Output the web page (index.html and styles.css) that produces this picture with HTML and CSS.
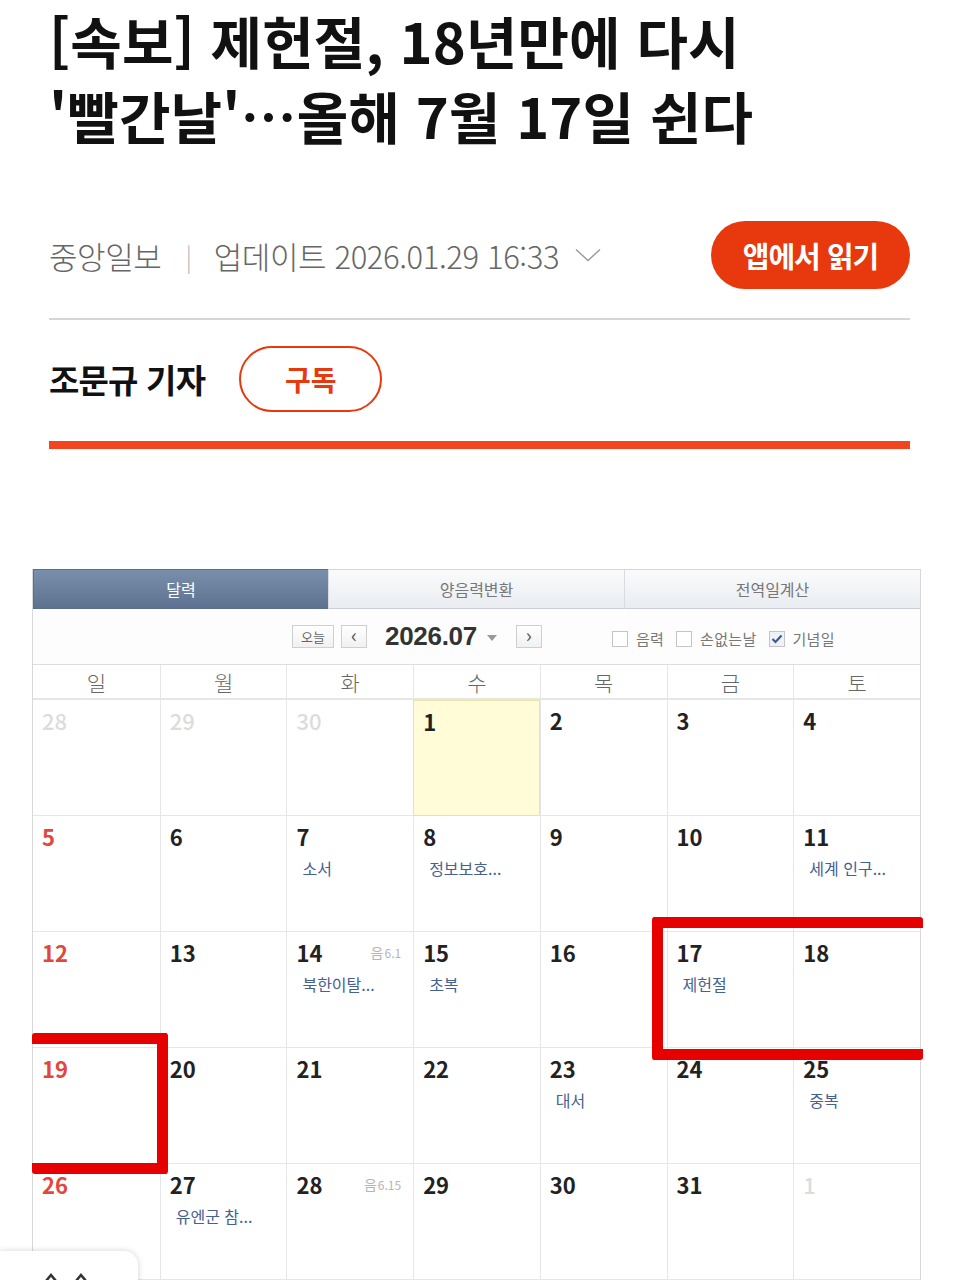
FILE: index.html
```html
<!DOCTYPE html>
<html lang="ko">
<head>
<meta charset="utf-8">
<title>제헌절 기사</title>
<link rel="stylesheet" href="styles.css">
</head>
<body>
<main class="article">
  <h1 class="title">[속보] 제헌절, 18년만에 다시<br>'빨간날'…올해 7월 17일 쉰다</h1>

  <div class="meta">
    <div class="meta-info">
      <span class="source">중앙일보</span>
      <span class="sep">|</span>
      <span class="updated">업데이트 2026.01.29 16:33</span>
      <svg class="chev" width="26" height="14" viewBox="0 0 26 14"><path d="M1 1.5 L13 12.5 L25 1.5" fill="none" stroke="#999" stroke-width="1.4"/></svg>
    </div>
    <a class="app-btn">앱에서 읽기</a>
  </div>

  <div class="byline">
    <span class="reporter">조문규 기자</span>
    <a class="sub-btn">구독</a>
  </div>
  <div class="accent-bar"></div>

  <figure class="cal">
    <div class="cal-tabs">
      <div class="tab tab-on">달력</div>
      <div class="tab">양음력변환</div>
      <div class="tab">전역일계산</div>
    </div>
    <div class="cal-tool">
      <div class="nav">
        <span class="btn-sm btn-today">오늘</span>
        <span class="btn-sm btn-arrow">&lsaquo;</span>
        <span class="ym">2026.07</span>
        <svg class="ym-caret" width="10" height="6" viewBox="0 0 10 6"><path d="M0 0 H10 L5 6 Z" fill="#999"/></svg>
        <span class="btn-sm btn-arrow">&rsaquo;</span>
      </div>
      <div class="opts">
        <span class="chk"></span><span class="opt">음력</span>
        <span class="chk"></span><span class="opt">손없는날</span>
        <span class="chk chk-on"><svg width="12" height="10" viewBox="0 0 12 10"><path d="M1.5 5 L4.5 8 L10.5 1.5" fill="none" stroke="#3d5a8c" stroke-width="2.2"/></svg></span><span class="opt">기념일</span>
      </div>
    </div>
    <div class="cal-head">
      <div>일</div><div>월</div><div>화</div><div>수</div><div>목</div><div>금</div><div>토</div>
    </div>
    <div class="cal-grid">
      <div class="cell off"><span class="num">28</span></div>
      <div class="cell off"><span class="num">29</span></div>
      <div class="cell off"><span class="num">30</span></div>
      <div class="cell today"><span class="num">1</span></div>
      <div class="cell"><span class="num">2</span></div>
      <div class="cell"><span class="num">3</span></div>
      <div class="cell"><span class="num">4</span></div>

      <div class="cell sun"><span class="num">5</span></div>
      <div class="cell"><span class="num">6</span></div>
      <div class="cell"><span class="num">7</span><span class="ev">소서</span></div>
      <div class="cell"><span class="num">8</span><span class="ev">정보보호...</span></div>
      <div class="cell"><span class="num">9</span></div>
      <div class="cell"><span class="num">10</span></div>
      <div class="cell"><span class="num">11</span><span class="ev">세계 인구...</span></div>

      <div class="cell sun"><span class="num">12</span></div>
      <div class="cell"><span class="num">13</span></div>
      <div class="cell"><span class="num">14</span><span class="lunar">음<b>6.1</b></span><span class="ev">북한이탈...</span></div>
      <div class="cell"><span class="num">15</span><span class="ev">초복</span></div>
      <div class="cell"><span class="num">16</span></div>
      <div class="cell"><span class="num">17</span><span class="ev">제헌절</span></div>
      <div class="cell"><span class="num">18</span></div>

      <div class="cell sun"><span class="num">19</span></div>
      <div class="cell"><span class="num">20</span></div>
      <div class="cell"><span class="num">21</span></div>
      <div class="cell"><span class="num">22</span></div>
      <div class="cell"><span class="num">23</span><span class="ev">대서</span></div>
      <div class="cell"><span class="num">24</span></div>
      <div class="cell"><span class="num">25</span><span class="ev">중복</span></div>

      <div class="cell sun"><span class="num">26</span></div>
      <div class="cell"><span class="num">27</span><span class="ev">유엔군 참...</span></div>
      <div class="cell"><span class="num">28</span><span class="lunar">음<b>6.15</b></span></div>
      <div class="cell"><span class="num">29</span></div>
      <div class="cell"><span class="num">30</span></div>
      <div class="cell"><span class="num">31</span></div>
      <div class="cell off"><span class="num">1</span></div>
    </div>
    <div class="mark mark-a"></div>
    <div class="mark mark-b"></div>
  </figure>
</main>
<div class="float-bar">
  <svg width="60" height="12" viewBox="0 0 60 12"><path d="M6 10 L11 4 L16 10" fill="none" stroke="#333" stroke-width="2.5"/><path d="M36 10 L41 4 L46 10" fill="none" stroke="#333" stroke-width="2.5"/></svg>
</div>
</body>
</html>
```

FILE: styles.css
```css
* { box-sizing: border-box; }
html, body { margin: 0; padding: 0; background: #fff; }
body {
  font-family: "Noto Sans CJK KR", "Noto Sans", sans-serif;
  color: #111;
  position: relative;
}
.article { padding: 0 49px 0 49px; }

.title {
  margin: 0;
  padding-top: 2px;
  font-size: 56px;
  line-height: 75px;
  font-weight: 700;
  letter-spacing: 0.1px;
  color: #111;
}

.meta {
  margin-top: 69px;
  height: 68px;
  display: flex;
  align-items: center;
  justify-content: space-between;
}
.meta-info {
  display: flex;
  align-items: center;
  color: #666;
  font-size: 31px;
  font-weight: 300;
  letter-spacing: -0.4px;
}
.sep { color: #bbb; margin: 0 22px 0 24px; font-size: 26px; }
.chev { margin-left: 16px; margin-top: 0; }
.app-btn {
  width: 199px;
  height: 68px;
  border-radius: 34px;
  background: #e8390e;
  color: #fff;
  font-size: 29px;
  font-weight: 700;
  letter-spacing: -1px;
  display: flex;
  align-items: center;
  justify-content: center;
}

.byline {
  margin-top: 29px;
  border-top: 2px solid #d6d6d6;
  padding-top: 26px;
  display: flex;
  align-items: center;
  gap: 34px;
}
.reporter { font-size: 33px; font-weight: 700; letter-spacing: -0.8px; color: #111; }
.sub-btn {
  width: 143px;
  height: 66px;
  border: 2px solid #e8390e;
  border-radius: 33px;
  color: #e8390e;
  font-size: 28px;
  font-weight: 700;
  display: flex;
  align-items: center;
  justify-content: center;
}
.accent-bar { margin-top: 29px; height: 8px; background: #f2441f; }

/* calendar screenshot */
.cal {
  margin: 120px 0 0 -17px;
  width: 889px;
  position: relative;
  border-left: 1px solid #d8d8d8;
  border-right: 1px solid #d8d8d8;
  font-family: "Noto Sans CJK KR", sans-serif;
}
.cal-tabs { display: grid; grid-template-columns: 295px 296px 1fr; height: 40px; }
.tab {
  display: flex; align-items: center; justify-content: center;
  font-size: 16px; color: #777;
  background: linear-gradient(#fafbfc, #e9ecf0);
  border-top: 1px solid #d4d8de;
  border-bottom: 1px solid #c9ced6;
  border-left: 1px solid #d8dce2;
}
.tab-on {
  background: linear-gradient(#7a8fab, #5d7290);
  color: #fff;
  border-color: #5a6f8c;
}
.cal-tool {
  height: 56px;
  display: flex;
  align-items: center;
  padding-left: 259px;
  background: #fdfdfd;
  border-bottom: 1px solid #ddd;
}
.nav { display: flex; align-items: center; }
.btn-sm {
  height: 23px;
  border: 1px solid #cfcfcf;
  background: linear-gradient(#fff, #f1f1f1);
  color: #666;
  display: flex; align-items: center; justify-content: center;
  font-size: 13px;
}
.btn-today { width: 42px; }
.btn-arrow { width: 26px; margin-left: 7px; font-size: 20px; line-height: 1; padding-bottom: 3px; color: #555; }
.ym {
  margin-left: 18px;
  font-family: "Liberation Sans", Arial, sans-serif;
  font-weight: 700;
  font-size: 26px;
  color: #333;
  letter-spacing: -0.3px;
}
.ym-caret { margin: 2px 12px 0 10px; }
.opts { display: flex; align-items: center; margin-left: 70px; padding-top: 4px; }
.chk {
  width: 16px; height: 16px;
  border: 1px solid #c4c4c4;
  background: #fff;
  display: flex; align-items: center; justify-content: center;
}
.chk-on { background: #eef2f8; }
.opt { font-size: 15px; color: #777; margin: 0 12px 0 8px; letter-spacing: 0.3px; }

.cal-head {
  display: grid; grid-template-columns: repeat(7, 1fr);
  height: 35px;
  border-bottom: 2px solid #e6e6e6;
}
.cal-head div {
  display: flex; align-items: center; justify-content: center;
  font-size: 21px; font-weight: 300; color: #666;
  border-left: 1px solid #e6e6e6;
}
.cal-head div:first-child { border-left: none; }

.cal-grid { display: grid; grid-template-columns: repeat(7, 1fr); grid-auto-rows: 116px; }
.cell {
  position: relative;
  border-left: 1px solid #e6e6e6;
  border-bottom: 1px solid #e6e6e6;
  padding: 5px 10px 0 9px;
  display: flex; flex-direction: column; align-items: flex-start;
}
.cal-grid .cell:nth-child(7n+1) { border-left: none; }
.num { font-size: 22px; font-weight: 700; color: #222; line-height: 30px; }
.sun .num { color: #e2473b; }
.off .num { color: #dcdcdc; font-weight: 500; }
.today { background: #fffcd7; border: 1px solid #e9e3a8; }
.ev { margin: 5px 0 0 6px; font-size: 16px; color: #45618f; }
.lunar { position: absolute; top: 10px; right: 12px; font-size: 14px; color: #b5b5b5; }
.lunar b { font-weight: 400; font-size: 12px; margin-left: 1px; }

.mark {
  position: absolute;
  border: 11px solid #e60000;
  border-radius: 3px;
}
.mark-a { left: 619px; top: 348px; width: 271px; height: 143px; border-right: none; }
.mark-b { left: -1px; top: 464px; width: 136px; height: 141px; border-left: none; }

.float-bar {
  position: absolute;
  left: 0; top: 1251px;
  width: 138px; height: 40px;
  background: #fff;
  border-radius: 0 14px 0 0;
  box-shadow: 0 0 6px rgba(0,0,0,0.18);
  padding: 20px 0 0 40px;
}
.float-bar svg { display: block; }
```
